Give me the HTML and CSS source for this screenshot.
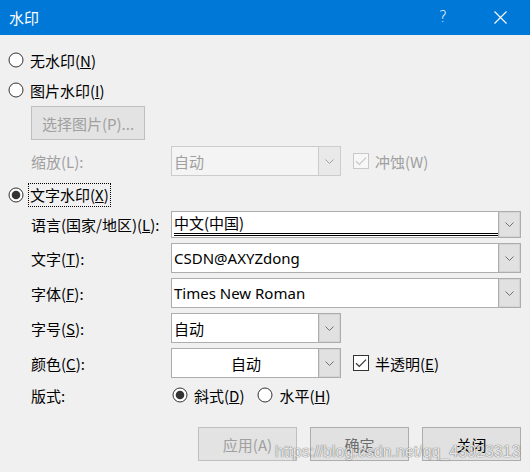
FILE: index.html
```html
<!DOCTYPE html>
<html lang="zh-CN">
<head>
<meta charset="utf-8">
<title>水印</title>
<link rel="stylesheet" href="styles.css">
</head>
<body>
<div class="dialog">
  <div class="titlebar">
    <span class="title">水印</span>
    <span class="tb-help">?</span>
    <span class="tb-close"><svg width="13" height="13" viewBox="0 0 13 13"><path d="M0.5 0.5L12.5 12.5M12.5 0.5L0.5 12.5" stroke="#fff" stroke-width="1.1" fill="none"/></svg></span>
  </div>
  <div class="content">
    <div class="radio-row">
      <svg class="radio" width="16" height="16" viewBox="0 0 16 16"><circle cx="8" cy="8" r="7" fill="#fff" stroke="#333" stroke-width="1"/></svg>
      <span class="lbl">无水印(<u>N</u>)</span>
    </div>
    <div class="radio-row">
      <svg class="radio" width="16" height="16" viewBox="0 0 16 16"><circle cx="8" cy="8" r="7" fill="#fff" stroke="#333" stroke-width="1"/></svg>
      <span class="lbl">图片水印(<u>I</u>)</span>
    </div>
    <div class="pic-btn-row">
      <div class="btn btn-disabled pic-btn">选择图片(P)...</div>
    </div>
    <div class="form-row scale-row">
      <span class="flabel disabled-text">缩放(L):</span>
      <div class="combo combo-short combo-disabled">
        <div class="field">自动</div>
        <div class="drop"><svg width="9" height="5" viewBox="0 0 9 5"><path d="M0.5 0.5L4.5 4.5L8.5 0.5" stroke="#a0a0a0" fill="none"/></svg></div>
      </div>
      <div class="check">
        <svg width="16" height="16" viewBox="0 0 16 16"><rect x="0.5" y="0.5" width="15" height="15" fill="#f7f7f7" stroke="#c8c8c8"/><path d="M3 8.2L6.3 11.4L13 4.6" stroke="#c8c8c8" stroke-width="1.2" fill="none"/></svg>
        <span class="disabled-text">冲蚀(W)</span>
      </div>
    </div>
    <div class="radio-row radio-text">
      <svg class="radio" width="16" height="16" viewBox="0 0 16 16"><circle cx="8" cy="8" r="7" fill="#fff" stroke="#333" stroke-width="1"/><circle cx="8" cy="8" r="4.3" fill="#333"/></svg>
      <span class="lbl focus">文字水印(<u>X</u>)</span>
    </div>
    <div class="form-row lang-row">
      <span class="flabel">语言(国家/地区)(<u>L</u>):</span>
      <div class="combo combo-full">
        <div class="field"><span class="lang-val">中文(中国)</span></div>
        <div class="drop"><svg width="9" height="5" viewBox="0 0 9 5"><path d="M0.5 0.5L4.5 4.5L8.5 0.5" stroke="#707070" fill="none"/></svg></div>
      </div>
    </div>
    <div class="form-row">
      <span class="flabel">文字(<u>T</u>):</span>
      <div class="combo combo-full">
        <div class="field">CSDN@AXYZdong</div>
        <div class="drop"><svg width="9" height="5" viewBox="0 0 9 5"><path d="M0.5 0.5L4.5 4.5L8.5 0.5" stroke="#707070" fill="none"/></svg></div>
      </div>
    </div>
    <div class="form-row">
      <span class="flabel">字体(<u>F</u>):</span>
      <div class="combo combo-full">
        <div class="field">Times New Roman</div>
        <div class="drop"><svg width="9" height="5" viewBox="0 0 9 5"><path d="M0.5 0.5L4.5 4.5L8.5 0.5" stroke="#707070" fill="none"/></svg></div>
      </div>
    </div>
    <div class="form-row">
      <span class="flabel">字号(<u>S</u>):</span>
      <div class="combo combo-short">
        <div class="field">自动</div>
        <div class="drop"><svg width="9" height="5" viewBox="0 0 9 5"><path d="M0.5 0.5L4.5 4.5L8.5 0.5" stroke="#707070" fill="none"/></svg></div>
      </div>
    </div>
    <div class="form-row">
      <span class="flabel">颜色(<u>C</u>):</span>
      <div class="combo combo-short">
        <div class="field field-center">自动</div>
        <div class="drop"><svg width="9" height="5" viewBox="0 0 9 5"><path d="M0.5 0.5L4.5 4.5L8.5 0.5" stroke="#707070" fill="none"/></svg></div>
      </div>
      <div class="check">
        <svg width="16" height="16" viewBox="0 0 16 16"><rect x="0.5" y="0.5" width="15" height="15" fill="#fff" stroke="#333"/><path d="M3 8.2L6.3 11.4L13 4.6" stroke="#333" stroke-width="1.2" fill="none"/></svg>
        <span>半透明(<u>E</u>)</span>
      </div>
    </div>
    <div class="form-row layout-row">
      <span class="flabel">版式:</span>
      <div class="opt">
        <svg class="radio" width="16" height="16" viewBox="0 0 16 16"><circle cx="8" cy="8" r="7" fill="#fff" stroke="#333" stroke-width="1"/><circle cx="8" cy="8" r="4.3" fill="#333"/></svg>
        <span>斜式(<u>D</u>)</span>
      </div>
      <div class="opt">
        <svg class="radio" width="16" height="16" viewBox="0 0 16 16"><circle cx="8" cy="8" r="7" fill="#fff" stroke="#333" stroke-width="1"/></svg>
        <span>水平(<u>H</u>)</span>
      </div>
    </div>
    <div class="buttons">
      <div class="btn btn-disabled">应用(A)</div>
      <div class="btn btn-grey">确定</div>
      <div class="btn">关闭</div>
    </div>
  </div>
  <div class="watermark">https://blog.csdn.net/qq_43923313</div>
</div>
</body>
</html>
```

FILE: styles.css
```css
* { box-sizing: border-box; }
html, body { margin: 0; padding: 0; }
body {
  width: 530px;
  height: 472px;
  overflow: hidden;
  background: #f0f0f0;
  font-family: "Noto Sans CJK SC", "Noto Sans", sans-serif;
  font-size: 15px;
  color: #000;
}
.dialog { position: relative; width: 530px; height: 472px; overflow: hidden; }
.titlebar {
  height: 35px;
  background: #0078d7;
  color: #fff;
  display: flex;
  align-items: center;
  padding-left: 9px;
}
.title { font-size: 15px; }
.tb-help {
  margin-left: auto;
  width: 30px;
  text-align: center;
  font-family: "DejaVu Sans", sans-serif;
  font-weight: 200;
  font-size: 15px;
  line-height: 1;
}
.tb-close {
  margin-left: 27px;
  margin-right: 15px;
  width: 30px;
  display: flex;
  justify-content: center;
}
.content { padding: 10px 9px 0 8px; }
.radio-row {
  height: 30px;
  display: flex;
  align-items: center;
}
.radio { flex: none; }
.radio-row .lbl { margin-left: 6px; }
.radio-text { margin-top: 4px; }
.focus {
  outline: 1px dotted #000;
  outline-offset: 0;
  padding: 0 1px;
  margin-left: 5px !important;
  line-height: 22px;
}
.pic-btn-row { padding-left: 23px; margin-top: 1px; }
.btn {
  height: 34px;
  width: 99px;
  display: flex;
  align-items: center;
  justify-content: center;
  background: #e1e1e1;
  border: 1px solid #adadad;
  color: #000;
}
.btn-disabled { color: #a0a0a0; border-color: #bfbfbf; background: #e3e3e3; }
.btn-grey { color: #6d6d6d; }
.pic-btn { width: 114px; }
.disabled-text { color: #a0a0a0; }
.form-row {
  display: flex;
  align-items: center;
  height: 30px;
  margin-top: 5px;
}
.scale-row { margin-top: 6px; }
.lang-row { height: 27px; margin-top: 1px; }
.layout-row { margin-top: 2px; }
.flabel { width: 163px; padding-left: 23px; flex: none; white-space: nowrap; }
.combo {
  display: flex;
  height: 100%;
  border: 1px solid #adadad;
  background: #fff;
}
.combo-full { width: 351px; }
.combo-short { width: 170px; }
.field {
  flex: 1;
  display: flex;
  align-items: center;
  padding-left: 2px;
  font-family: "Noto Sans", "Noto Sans CJK SC", sans-serif;
}
.field-center { justify-content: center; }
.drop {
  width: 22px;
  flex: none;
  background: #e1e1e1;
  border-left: 1px solid #adadad;
  box-shadow: inset 0 0 0 1px #d4d4d4;
  display: flex;
  align-items: center;
  justify-content: center;
}
.combo-disabled { background: #f4f4f4; border-color: #cccccc; }
.combo-disabled .field { color: #a0a0a0; font-family: "Noto Sans CJK SC", sans-serif; }
.combo-disabled .drop { background: #e9e9e9; border-left-color: #cccccc; box-shadow: none; }
.lang-val {
  flex: 1;
  align-self: stretch;
  display: flex;
  align-items: center;
  border-bottom: 3px double #000;
  margin: 0 0 1px 0;
  font-family: "Noto Sans CJK SC", sans-serif;
}
.check {
  display: flex;
  align-items: center;
  margin-left: 12px;
  gap: 6px;
}
.opt { display: flex; align-items: center; gap: 6px; margin-left: 1px; }
.opt + .opt { margin-left: 13px; }
.buttons {
  display: flex;
  justify-content: flex-end;
  gap: 13px;
  margin-top: 17px;
}
.watermark {
  position: absolute;
  left: 275px;
  top: 443px;
  font-family: "Liberation Sans", Arial, sans-serif;
  font-size: 16px;
  color: rgba(255, 255, 255, 0.85);
  text-shadow: 0 0 1px rgba(60, 60, 60, 0.6), 0 0 1px rgba(60, 60, 60, 0.6);
  white-space: nowrap;
}
```
